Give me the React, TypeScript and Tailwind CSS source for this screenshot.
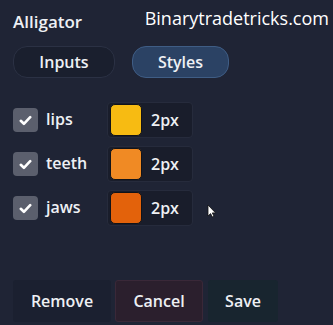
import React from "react";

const rows = [
  { label: "lips", color: "#f7bb12" },
  { label: "teeth", color: "#f08a24" },
  { label: "jaws", color: "#e3620b" },
];

function Check() {
  return (
    <div className="w-[25px] h-[24px] rounded-[4px] bg-[#5b5f6d] flex items-center justify-center">
      <svg width="13" height="11" viewBox="0 0 13 11" fill="none">
        <path d="M1.8 5.8 L4.9 8.8 L11.2 2.2" stroke="#ffffff" strokeWidth="2.6" strokeLinecap="round" strokeLinejoin="round" />
      </svg>
    </div>
  );
}

export default function App() {
  return (
    <div
      className="relative w-[333px] h-[325px] overflow-hidden bg-[#1f2435] text-[#eef0f4]"
      style={{ fontFamily: '"Open Sans", "Noto Sans", sans-serif' }}
    >
      <div className="flex h-[45px] pl-[13px]">
        <div className="mt-[10px] text-[17px] leading-[23px] font-semibold">Alligator</div>
        <div className="ml-auto mr-[4px] mt-[6px] text-[18px] leading-[24px] font-normal text-white">
          Binarytradetricks.com
        </div>
      </div>
      <div className="flex items-center h-[34px] pl-[13px]">
        <div className="w-[102px] h-[32px] rounded-[14px] bg-[#1a1f2e] border border-[#2b3144] flex items-center justify-center text-[16px] font-semibold">
          Inputs
        </div>
        <div className="ml-[17px] w-[97px] h-[32px] rounded-[14px] bg-[#2b4264] border border-[#3f5d85] flex items-center justify-center text-[16px] font-semibold">
          Styles
        </div>
      </div>
      <div className="mt-[23px] flex flex-col gap-[8px] pl-[13px]">
        {rows.map((r) => (
          <div key={r.label} className="flex items-center h-[36px]">
            <Check />
            <div className="ml-[8px] w-[61px] text-[16px] font-semibold leading-[20px] -mt-[3px]">{r.label}</div>
            <div className="w-[86px] h-[36px] rounded-[4px] bg-[#191d2b] border border-[#262b3c] flex items-center pl-[2px]">
              <div
                className="w-[32px] h-[32px] rounded-[5px] border border-[#111318]"
                style={{ backgroundColor: r.color }}
              />
              <div className="ml-[9px] text-[16px] font-semibold">2px</div>
            </div>
          </div>
        ))}
      </div>
      <div className="mt-[54px] flex items-stretch h-[42px] pl-[13px]">
        <div className="w-[98px] bg-[#1b2030] flex items-center justify-center text-[16px] font-semibold rounded-[3px]">
          Remove
        </div>
        <div className="ml-[4px] w-[88px] bg-[#2b1f2d] border border-[#3a2838] flex items-center justify-center text-[16px] font-semibold rounded-[3px]">
          Cancel
        </div>
        <div className="ml-[5px] w-[70px] bg-[#18252f] flex items-center justify-center text-[16px] font-semibold rounded-[3px]">
          Save
        </div>
      </div>
      <svg className="absolute left-[207px] top-[204px]" width="10" height="14" viewBox="0 0 10 14">
        <path d="M1 1 L1 12 L3.6 9.6 L5.4 13 L7 12.2 L5.3 8.9 L8.6 8.9 Z" fill="#ffffff" stroke="#111" strokeWidth="0.8" />
      </svg>
    </div>
  );
}
